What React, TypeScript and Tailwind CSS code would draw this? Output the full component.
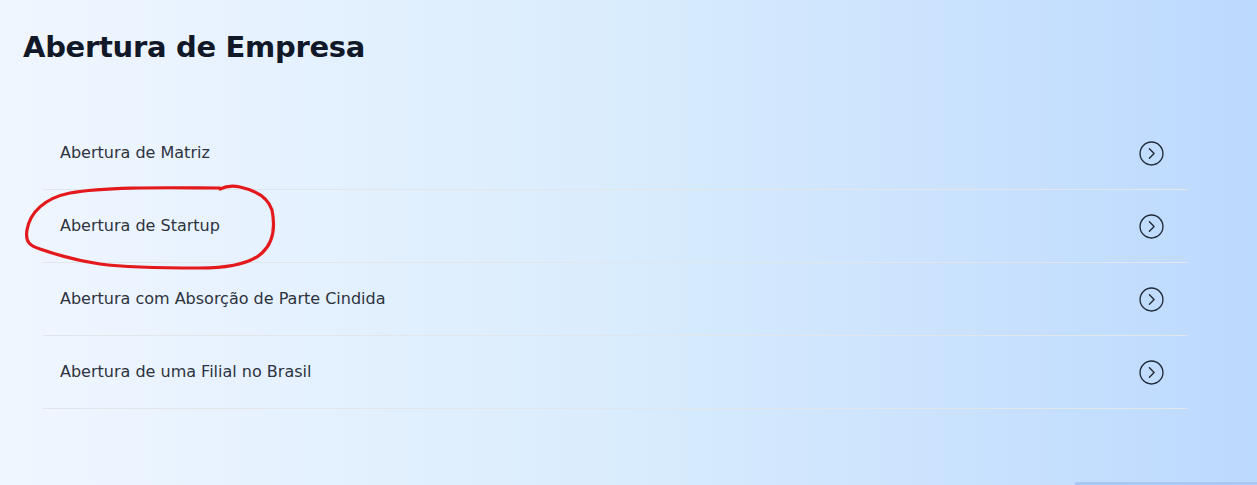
import React from "react";

const items = [
  "Abertura de Matriz",
  "Abertura de Startup",
  "Abertura com Absorção de Parte Cindida",
  "Abertura de uma Filial no Brasil",
];

function CircleChevron() {
  return (
    <svg width="25" height="25" viewBox="0 0 24 24" fill="none" stroke="#1f2937" strokeWidth="1.3" strokeLinecap="round" strokeLinejoin="round">
      <circle cx="12" cy="12" r="11" />
      <path d="M10 7.5l4.5 4.5-4.5 4.5" />
    </svg>
  );
}

export default function App() {
  return (
    <div
      className="relative w-[1257px] h-[485px] overflow-hidden bg-gradient-to-r from-[#f0f6ff] via-[#d9ecfd] to-[#bcd9fe]"
      style={{ fontFamily: '"DejaVu Sans", "Open Sans", sans-serif' }}
    >
      <div className="pl-[23px] pt-[28px]">
        <h1 className="text-[29px] leading-[38px] font-bold text-[#111827] tracking-[-0.3px]">
          Abertura de Empresa
        </h1>
      </div>
      <ul className="ml-[43px] mt-[51px] w-[1145px]">
        {items.map((t) => (
          <li
            key={t}
            className="flex h-[73px] items-center justify-between border-b border-[#e2e6ea] pl-[17px] pr-[24px]"
          >
            <span className="text-[16px] text-[#2d3340]">{t}</span>
            <CircleChevron />
          </li>
        ))}
      </ul>
      <div className="absolute bottom-0 right-0 h-[3px] w-[182px] bg-[#a9c9f5]" />
      <svg className="pointer-events-none absolute inset-0" width="1257" height="485">
        <path
          d="M220 188 C180 188 110 186 70 193 C45 198 30 212 27 230 C25 242 30 246 40 249 C60 256 80 261 100 264 C130 268 170 268 200 268 C225 268 250 264 262 253 C274 242 275 225 272 210 C268 198 258 191 240 187 C232 185 226 186 220 189"
          fill="none"
          stroke="#e3191c"
          strokeWidth="3.2"
          strokeLinecap="round"
          strokeLinejoin="round"
        />
      </svg>
    </div>
  );
}
